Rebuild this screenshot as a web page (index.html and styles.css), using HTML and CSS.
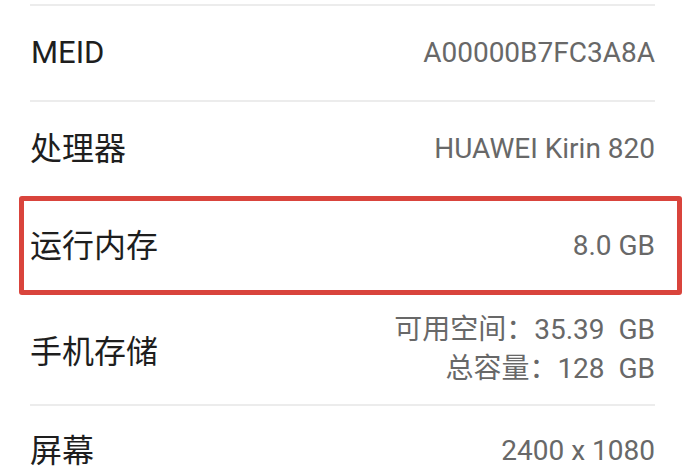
FILE: index.html
```html
<!DOCTYPE html>
<html lang="zh">
<head>
<meta charset="utf-8">
<link rel="stylesheet" href="styles.css">
</head>
<body>
<div class="list">
  <div class="row row-meid">
    <span class="label latin">MEID</span>
    <span class="value">A00000B7FC3A8A</span>
  </div>
  <div class="row row-cpu">
    <span class="label">处理器</span>
    <span class="value">HUAWEI Kirin 820</span>
  </div>
  <div class="row row-ram highlight">
    <span class="label">运行内存</span>
    <span class="value">8.0 GB</span>
  </div>
  <div class="row row-storage">
    <span class="label">手机存储</span>
    <div class="value multi">
      <span>可用空间：35.39&nbsp; GB</span>
      <span>总容量：128&nbsp; GB</span>
    </div>
  </div>
  <div class="row row-screen">
    <span class="label">屏幕</span>
    <span class="value">2400 x 1080</span>
  </div>
</div>
</body>
</html>
```
FILE: styles.css
```css
html, body {
  margin: 0;
  padding: 0;
  background: #ffffff;
  overflow: hidden;
}
body {
  width: 693px;
  height: 471px;
  font-family: Roboto, "Noto Sans CJK SC", sans-serif;
}
.list {
  padding: 4px 38px 0 30px;
}
.row {
  display: flex;
  justify-content: space-between;
  align-items: center;
  border-top: 2px solid #ececec;
  box-sizing: border-box;
}
.label {
  font-size: 32px;
  line-height: 36px;
  color: #1e1e1e;
}
.latin {
  font-size: 31px;
  padding-left: 1px;
}
.value {
  font-size: 28px;
  line-height: 34px;
  color: #686868;
}
.row-meid { height: 96px; }
.row-cpu { height: 96px; }
.highlight {
  height: 99px;
  margin: 0 -27px 0 -11px;
  padding: 0 22px 0 6px;
  border: 5px solid #d9443c;
  border-radius: 3px;
}
.row-storage {
  height: 109px;
  border-top: none;
  padding-top: 4px;
}
.multi {
  display: flex;
  flex-direction: column;
  align-items: flex-end;
  gap: 5px;
  margin-top: -4px;
}
.row-screen {
  height: 66px;
  padding-top: 26px;
}
```
